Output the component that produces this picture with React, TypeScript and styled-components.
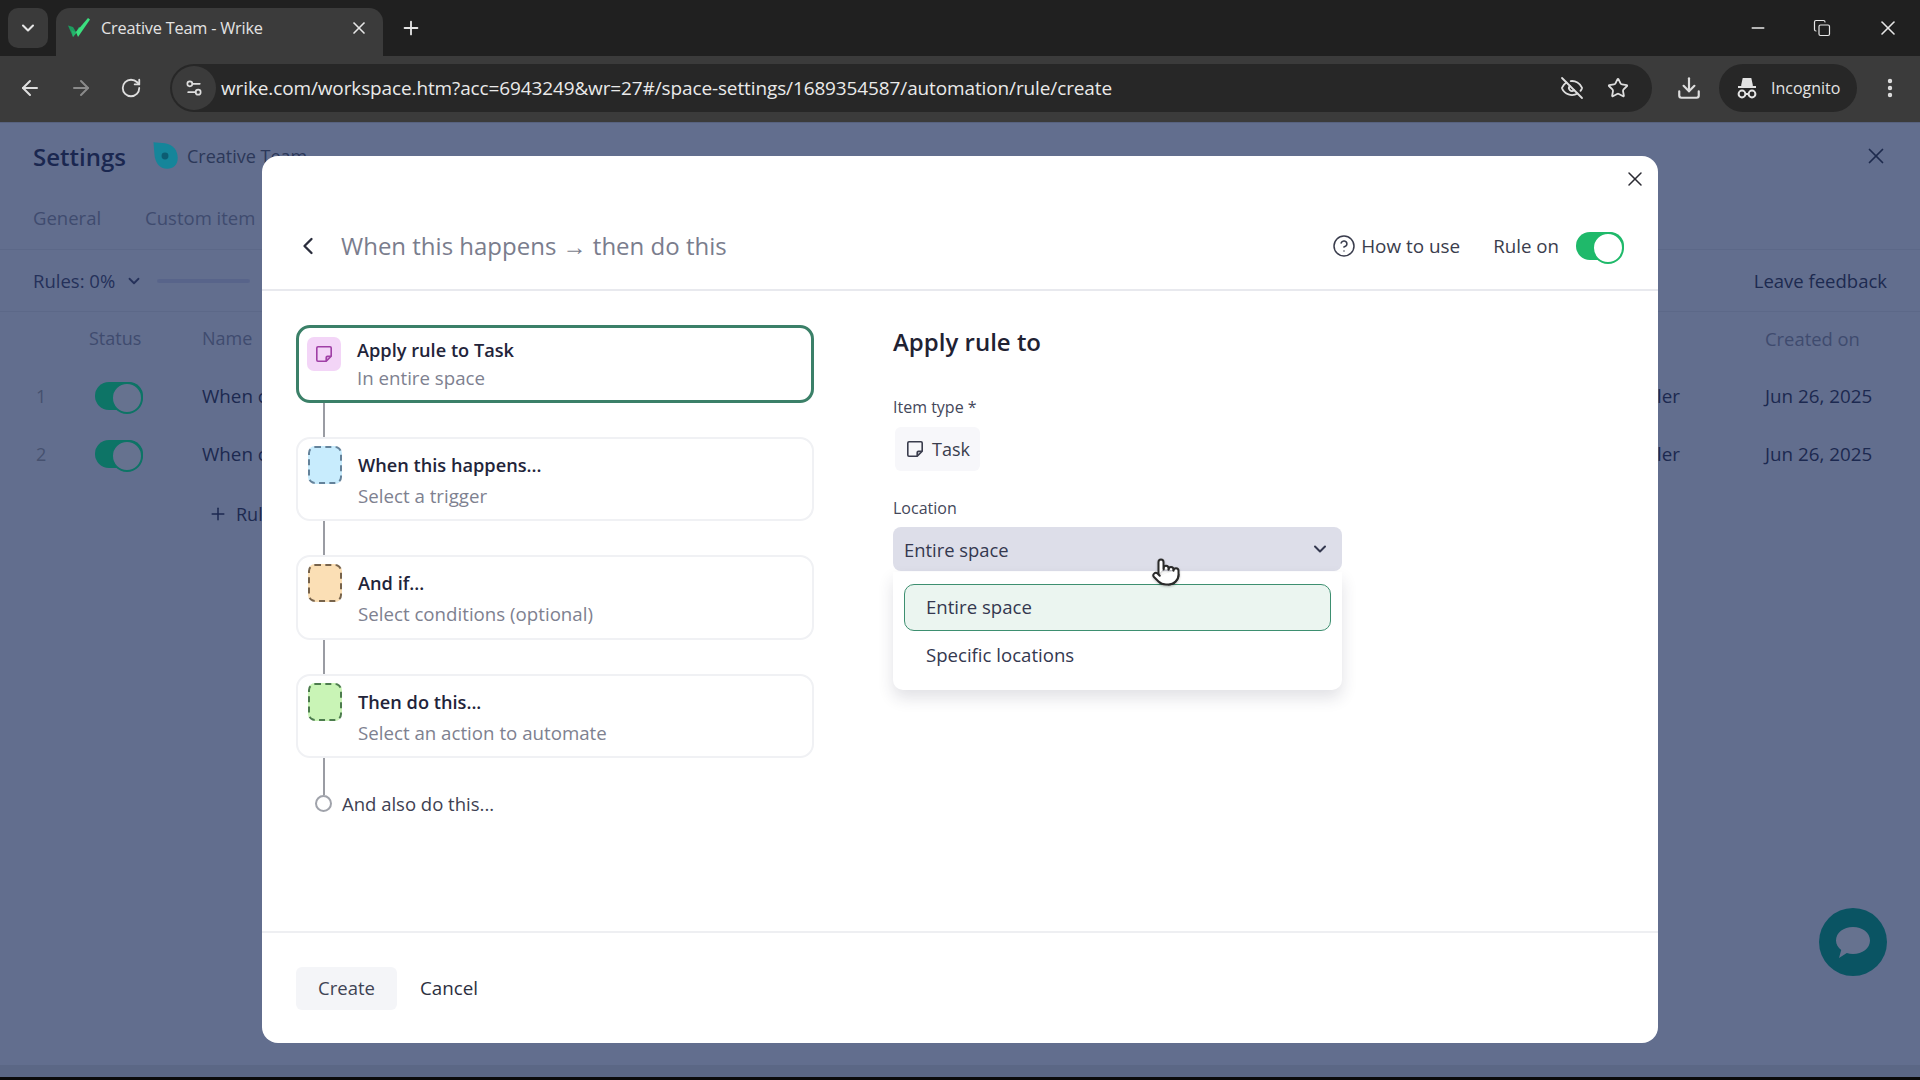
import React from "react";
import styled, { createGlobalStyle } from "styled-components";
import {
  ArrowLeft, ArrowRight, ChevronDown, ChevronLeft, CircleHelp, Copy, Download, EllipsisVertical,
  EyeOff, Minus, Plus, Pointer, RotateCw, Settings2, Star, X,
} from "lucide-react";

const Global = createGlobalStyle`
  html, body { margin: 0; padding: 0; background: #000; }
  * { box-sizing: border-box; }
  body { font-family: "Open Sans", "Noto Sans", "Liberation Sans", sans-serif; }
`;

const Screen = styled.div`
  width: 1920px; height: 1080px; display: flex; flex-direction: column; overflow: hidden; background: #000;
`;

/* ---------- browser chrome ---------- */
const TabStrip = styled.div`
  height: 56px; flex: none; background: #202020; display: flex; align-items: flex-end;
  padding-left: 8px; color: #e6e6e6;
`;
const TabSearch = styled.div`
  width: 40px; height: 40px; margin-bottom: 8px; border-radius: 10px; background: #3a3a3a;
  display: flex; align-items: center; justify-content: center;
`;
const Tab = styled.div`
  width: 327px; height: 48px; margin-left: 8px; background: #3b3b3b; border-radius: 14px 14px 0 0;
  display: flex; align-items: center; padding: 0 14px 8px 11px; gap: 10px;
`;
const TabTitle = styled.span`
  flex: 1; font-size: 16.3px; letter-spacing: -0.2px; white-space: nowrap; color: #e3e3e3;
`;
const NewTab = styled.div`
  width: 55px; display: flex; justify-content: center; align-self: center; margin-top: 0;
`;
const WindowControls = styled.div`
  margin-left: auto; align-self: center; display: flex; align-items: center; gap: 45px; padding-right: 20px;
`;
const Toolbar = styled.div`
  height: 66px; flex: none; background: #3b3b3b; display: flex; align-items: center; color: #dedede;
  padding: 0 0 2px 18px;
`;
const NavButtons = styled.div`
  display: flex; gap: 27px; align-items: center; width: 152px; flex: none;
`;
const AddressBar = styled.div`
  width: 1482px; flex: none; height: 48px; background: #272727; border-radius: 24px; display: flex; align-items: center;
  padding: 0 23px 0 2px;
`;
const SiteChip = styled.div`
  width: 44px; height: 44px; border-radius: 50%; background: #3b3b3b; display: flex; align-items: center;
  justify-content: center; margin-right: 5px;
`;
const Url = styled.span`
  flex: 1; font-size: 18.97px; letter-spacing: -0.1px; color: #eaeaea; white-space: nowrap;
`;
const BarIcons = styled.div`
  display: flex; gap: 23px; align-items: center;
`;
const DownloadSlot = styled.div`
  width: 67px; flex: none; padding-left: 6px; display: flex; justify-content: center;
`;
const IncognitoPill = styled.div`
  width: 138px; flex: none; height: 48px; border-radius: 24px; background: #272727; display: flex; align-items: center;
  padding-left: 16px; gap: 12px; font-size: 16px; color: #e3e3e3;
`;
const MenuSlot = styled.div`
  width: 63px; flex: none; padding-left: 2px; display: flex; justify-content: center;
`;

/* ---------- dimmed page ---------- */
const Page = styled.div`
  flex: 1; position: relative; background: #626e8e; color: #1b2850; font-size: 18px;
  border-top: 1px solid #57627f;
`;
const PageHeader = styled.div`
  height: 68px; display: flex; align-items: center; padding: 0 33px 2px; gap: 24px;
`;
const PageTitle = styled.h1`
  margin: 0; font-size: 24px; font-weight: 600; color: #1a2750;
`;
const SpaceName = styled.div`
  display: flex; align-items: center; gap: 7px; font-size: 18px; color: #2c3859;
`;
const PageClose = styled.div`
  margin-left: auto; display: flex; color: #1d2a4d; margin: -1px -2px 0 auto;
`;
const PageTabs = styled.div`
  height: 59px; display: flex; gap: 44px; padding: 0 33px 5px; align-items: center; color: #3f4b6e; font-size: 18.5px;
  border-bottom: 1px solid #5c6888;
`;
const RulesBar = styled.div`
  height: 62px; display: flex; align-items: center; padding: 0 33px; border-bottom: 1px solid #5c6888;
  font-size: 18.5px; color: #25315a;
`;
const RulesSlider = styled.div`
  width: 93px; height: 4px; background: #56618a; border-radius: 2px; margin-left: 14px; opacity: .8;
`;
const Feedback = styled.span`
  margin-left: auto; color: #1d2a50;
`;
const TableRow = styled.div<{ $h: number }>`
  height: ${(p) => p.$h}px; display: grid; align-items: center; padding-left: 33px;
  grid-template-columns: 56px 113px 1fr 112px 155px;
`;
const TableHead = styled(TableRow)`
  margin-top: -2.5px;
`;
const HeadCell = styled.span`
  color: #3f4b6e; font-size: 18px;
`;
const DateHead = styled(HeadCell)`
  font-size: 18.4px;
`;
const IndexCell = styled.span`
  color: #46516f; font-size: 18px; padding-left: 3px;
`;
const Cell = styled.span`
  color: #1c2950; font-size: 18.8px; white-space: nowrap;
`;
const EndCell = styled(Cell)`
  text-align: right; padding-right: 85px; grid-column: 4;
`;
const StatusCell = styled.div`
  padding-left: 6px; display: flex;
`;
const AddRule = styled.div`
  display: flex; align-items: center; gap: 8px; padding: 19px 0 0 208px; color: #1c2950; font-size: 18px;
`;
const Toggle = styled.div<{ $track: string; $knob: string }>`
  width: 48px; height: 28px; border-radius: 14px; background: ${(p) => p.$track}; position: relative;
  &::after {
    content: ""; position: absolute; right: 0; top: 0; width: 28px; height: 28px; border-radius: 50%;
    background: ${(p) => p.$knob}; border: 2px solid ${(p) => p.$track};
  }
`;
const ChatBubble = styled.div`
  position: absolute; left: 1819px; top: 785px; width: 68px; height: 68px; border-radius: 50%;
  background: #0a5463; display: flex; align-items: center; justify-content: center;
`;
const PageFoot = styled.div`
  position: absolute; left: 0; right: 0; bottom: 0; height: 12px; background: #5b6785;
`;
const BottomEdge = styled.div`
  height: 3px; flex: none; background: #0b0b0b;
`;

/* ---------- modal ---------- */
const Modal = styled.div`
  position: absolute; left: 262px; top: 33px; width: 1396px; height: 887px; background: #fff; border-radius: 16px;
  display: flex; flex-direction: column; color: #1f2233;
`;
const ModalClose = styled.div`
  position: absolute; right: 11px; top: 11px; display: flex; color: #2b2b33;
`;
const ModalHeader = styled.div`
  height: 135px; flex: none; border-bottom: 2px solid #e8e9ee; display: flex; align-items: center;
  padding: 46px 34px 0 32px; color: #2a2d3c;
`;
const BackIcon = styled.div`
  width: 47px; display: flex;
`;
const ModalTitle = styled.h2`
  margin: 0; font-size: 24px; font-weight: 400; color: #7a7d8d; white-space: nowrap;
`;
const HelpLink = styled.div`
  margin-left: auto; display: flex; align-items: center; gap: 5px; font-size: 18.9px; color: #3a3d4d;
`;
const RuleLabel = styled.span`
  margin: 0 17px 0 33px; font-size: 18.7px; color: #3a3d4d;
`;
const ModalBody = styled.div`
  flex: 1; display: flex; padding: 34px 0 0 34px;
`;
const StepColumn = styled.div`
  width: 518px; flex: none; display: flex; flex-direction: column;
`;
const StepCard = styled.div<{ $h: number; $active?: boolean }>`
  height: ${(p) => p.$h}px; flex: none; border-radius: 14px; display: flex; gap: 17px;
  padding: ${(p) => (p.$active ? "9px 8px" : "7px 10px")};
  border: ${(p) => (p.$active ? "3px solid #3b8068" : "2px solid #f0f1f4")};
`;
const StepIcon = styled.div<{ $bg: string; $dash?: string }>`
  width: 34px; height: ${(p) => (p.$dash ? "38px" : "34px")}; flex: none; border-radius: 7px; background: ${(p) => p.$bg};
  border: ${(p) => (p.$dash ? `2px dashed ${p.$dash}` : "none")};
  display: flex; align-items: center; justify-content: center; color: #a03fa6;
`;
const StepText = styled.div<{ $active?: boolean }>`
  display: flex; flex-direction: column; gap: ${(p) => (p.$active ? "4px" : "7px")}; padding-top: ${(p) => (p.$active ? "1px" : "7px")};
  margin-left: -1px;
`;
const StepTitle = styled.div`
  font-size: 18.2px; font-weight: 600; color: #22243a; line-height: 24px;
`;
const StepSub = styled.div`
  font-size: 18.7px; color: #7e8190; line-height: 24px;
`;
const Connector = styled.div<{ $h: number }>`
  width: 1.5px; height: ${(p) => p.$h}px; background: #9a9ca3; margin-left: 27px; flex: none;
`;
const AlsoRow = styled.div`
  display: flex; align-items: center; gap: 10px; margin-left: 19px; font-size: 18.5px; color: #3e4152; height: 17px;
`;
const AlsoDot = styled.div`
  width: 17px; height: 17px; border-radius: 50%; border: 2px solid #a0a3ab; flex: none;
`;
const Panel = styled.div`
  margin-left: 79px; width: 449px; display: flex; flex-direction: column; position: relative;
`;
const PanelTitle = styled.h3`
  margin: -1px 0 0; font-size: 24px; font-weight: 600; line-height: 36px; color: #1f2233;
`;
const FieldLabel = styled.div<{ $top: number }>`
  margin-top: ${(p) => p.$top}px; font-size: 16px; line-height: 22px; color: #44475a;
`;
const TaskChip = styled.div`
  margin: 9px 0 0 2px; width: 85px; height: 44px; border-radius: 6px; background: #f7f7fa; display: flex;
  align-items: center; gap: 8px; padding-left: 11px; font-size: 18px; color: #3a3d4d;
`;
const Select = styled.div`
  margin-top: 8px; height: 44px; border-radius: 8px; background: #dddee9; display: flex; align-items: center;
  justify-content: space-between; padding: 0 12px 0 11px; font-size: 18.4px; color: #34384f;
`;
const Menu = styled.div`
  position: absolute; top: 247px; left: 0; width: 449px; height: 118px; background: #fff; padding: 12px 11px;
  border-radius: 0 0 10px 10px; box-shadow: 0 8px 16px rgba(40, 44, 70, .14);
  display: flex; flex-direction: column; gap: 1px;
`;
const MenuItem = styled.div<{ $selected?: boolean }>`
  height: 47px; flex: none; display: flex; align-items: center; padding: 0 0 2px 21px; border-radius: 10px; font-size: 18.6px;
  color: #34384f; background: ${(p) => (p.$selected ? "#ebf5f0" : "transparent")};
  border: ${(p) => (p.$selected ? "1.5px solid #3d8f70" : "1.5px solid transparent")};
`;
const Cursor = styled.div`
  position: absolute; left: 1151px; top: 434px; display: flex; filter: drop-shadow(0 1px 1px rgba(0,0,0,.25));
`;
const ModalFooter = styled.div`
  height: 112px; flex: none; border-top: 2px solid #eeeff2; display: flex; align-items: center; padding: 0 34px; gap: 23px;
  margin-top: auto; font-size: 18.5px;
`;
const CreateBtn = styled.div`
  width: 101px; height: 43px; background: #f4f5f8; border-radius: 6px; display: flex; align-items: center; justify-content: center;
  color: #3f4354; padding-bottom: 2px;
`;
const CancelBtn = styled.div`
  color: #2c2f3e; font-size: 18.8px;
`;

const WrikeMark = () => (
  <svg width="24" height="22" viewBox="0 0 24 22">
    <path d="M1 8.500l5 1.500 3 5-3 5z" fill="#1d9c5f" />
    <path d="M6 20L4.500 13 9 15 12 10l2 1z" fill="#26b36b" />
    <path d="M9 15L21 1l2 1.500L11 20z" fill="#3be07f" />
  </svg>
);
const SpaceLogo = () => (
  <svg width="30" height="30" viewBox="0 0 26 26">
    <path d="M3 1l10 1c7 1 11 6 11 13 0 6-4 9-9 9-7 0-10-5-11-11z" fill="#15859a" />
    <circle cx="13" cy="13" r="3" fill="#0c5c72" />
  </svg>
);
const NoteIcon = ({ size = 18, color = "currentColor" }: { size?: number; color?: string }) => (
  <svg width={size} height={size} viewBox="0 0 18 18" fill="none" stroke={color} strokeWidth="1.6">
    <path d="M3 1.800h12a1.200 1.200 0 0 1 1.200 1.200v8.200l-5 5H3A1.200 1.200 0 0 1 1.800 15V3A1.200 1.200 0 0 1 3 1.800z" />
    <path d="M11.200 16v-3.600a1.200 1.200 0 0 1 1.200-1.200H16" fill={color} fillOpacity=".35" />
  </svg>
);
const IncognitoIcon = () => (
  <svg width="24" height="24" viewBox="0 0 24 24" fill="none" stroke="#e3e3e3" strokeWidth="2">
    <path d="M7 10l1.500-7h7L17 10" fill="#e3e3e3" />
    <path d="M3 11h18" />
    <circle cx="7" cy="18" r="3.400" />
    <circle cx="17" cy="18" r="3.400" />
    <path d="M10.400 18h3.200" />
  </svg>
);
const ChatIcon = () => (
  <svg width="36" height="34" viewBox="0 0 36 34">
    <path d="M18 2c9.400 0 17 5.600 17 13.500S27.400 29 18 29c-2.200 0-4.300-.3-6.200-.9L4 33l2.200-8C3 22.600 1 19.300 1 15.500 1 7.600 8.600 2 18 2z" fill="#66728f" />
  </svg>
);

const steps = [
  { title: "When this happens...", sub: "Select a trigger", h: 84, bg: "#c8ecfd", dash: "#64829a" },
  { title: "And if...", sub: "Select conditions (optional)", h: 85, bg: "#fbdfb5", dash: "#77634b" },
  { title: "Then do this...", sub: "Select an action to automate", h: 84, bg: "#c9f4b6", dash: "#4c7c4d" },
];
const rows = ["1", "2"];

export default function App() {
  return (
    <Screen>
      <Global />
      <TabStrip>
        <TabSearch><ChevronDown size={20} strokeWidth={2.5} /></TabSearch>
        <Tab>
          <WrikeMark />
          <TabTitle>Creative Team - Wrike</TabTitle>
          <X size={20} strokeWidth={2} />
        </Tab>
        <NewTab><Plus size={22} strokeWidth={2} /></NewTab>
        <WindowControls>
          <Minus size={20} strokeWidth={1.6} />
          <Copy size={18} strokeWidth={1.6} />
          <X size={24} strokeWidth={1.6} />
        </WindowControls>
      </TabStrip>
      <Toolbar>
        <NavButtons>
          <ArrowLeft size={24} strokeWidth={2} />
          <ArrowRight size={24} strokeWidth={2} color="#8a8a8a" />
          <RotateCw size={22} strokeWidth={2} />
        </NavButtons>
        <AddressBar>
          <SiteChip><Settings2 size={20} strokeWidth={2} /></SiteChip>
          <Url>wrike.com/workspace.htm?acc=6943249&amp;wr=27#/space-settings/1689354587/automation/rule/create</Url>
          <BarIcons>
            <EyeOff size={24} strokeWidth={1.8} />
            <Star size={22} strokeWidth={2} />
          </BarIcons>
        </AddressBar>
        <DownloadSlot><Download size={26} strokeWidth={2} /></DownloadSlot>
        <IncognitoPill><IncognitoIcon />Incognito</IncognitoPill>
        <MenuSlot><EllipsisVertical size={24} strokeWidth={2.4} /></MenuSlot>
      </Toolbar>
      <Page>
        <PageHeader>
          <PageTitle>Settings</PageTitle>
          <SpaceName><SpaceLogo />Creative Team</SpaceName>
          <PageClose><X size={26} strokeWidth={1.6} /></PageClose>
        </PageHeader>
        <PageTabs>
          <span>General</span>
          <span>Custom item</span>
        </PageTabs>
        <RulesBar>
          <span>Rules: 0%</span>
          <ChevronDown size={18} strokeWidth={2.4} style={{ marginLeft: 10 }} />
          <RulesSlider />
          <Feedback>Leave feedback</Feedback>
        </RulesBar>
        <TableHead $h={57}>
          <span />
          <HeadCell>Status</HeadCell>
          <HeadCell>Name</HeadCell>
          <span />
          <DateHead>Created on</DateHead>
        </TableHead>
        {rows.map((n) => (
          <TableRow $h={58} key={n}>
            <IndexCell>{n}</IndexCell>
            <StatusCell><Toggle $track="#0d7466" $knob="#66728f" /></StatusCell>
            <Cell>When c</Cell>
            <EndCell>ler</EndCell>
            <Cell>Jun 26, 2025</Cell>
          </TableRow>
        ))}
        <AddRule><Plus size={20} strokeWidth={1.8} />Rule</AddRule>
        <PageFoot />
        <ChatBubble><ChatIcon /></ChatBubble>
        <Modal>
          <ModalClose><X size={24} strokeWidth={1.5} /></ModalClose>
          <ModalHeader>
            <BackIcon><ChevronLeft size={28} strokeWidth={2} /></BackIcon>
            <ModalTitle>When this happens → then do this</ModalTitle>
            <HelpLink><CircleHelp size={24} strokeWidth={1.5} />How to use</HelpLink>
            <RuleLabel>Rule on</RuleLabel>
            <Toggle $track="#1fb96a" $knob="#ffffff" />
          </ModalHeader>
          <ModalBody>
            <StepColumn>
              <StepCard $h={78} $active>
                <StepIcon $bg="#f3d5f7"><NoteIcon /></StepIcon>
                <StepText $active>
                  <StepTitle>Apply rule to Task</StepTitle>
                  <StepSub>In entire space</StepSub>
                </StepText>
              </StepCard>
              {steps.map((s) => (
                <React.Fragment key={s.title}>
                  <Connector $h={34} />
                  <StepCard $h={s.h}>
                    <StepIcon $bg={s.bg} $dash={s.dash} />
                    <StepText>
                      <StepTitle>{s.title}</StepTitle>
                      <StepSub>{s.sub}</StepSub>
                    </StepText>
                  </StepCard>
                </React.Fragment>
              ))}
              <Connector $h={37} />
              <AlsoRow><AlsoDot />And also do this...</AlsoRow>
            </StepColumn>
            <Panel>
              <PanelTitle>Apply rule to</PanelTitle>
              <FieldLabel $top={36}>Item type *</FieldLabel>
              <TaskChip><NoteIcon color="#3a3d4d" />Task</TaskChip>
              <FieldLabel $top={26}>Location</FieldLabel>
              <Select>Entire space<ChevronDown size={20} strokeWidth={2.4} /></Select>
              <Menu>
                <MenuItem $selected>Entire space</MenuItem>
                <MenuItem>Specific locations</MenuItem>
              </Menu>
            </Panel>
          </ModalBody>
          <ModalFooter>
            <CreateBtn>Create</CreateBtn>
            <CancelBtn>Cancel</CancelBtn>
          </ModalFooter>
        </Modal>
        <Cursor><Pointer size={30} strokeWidth={1.6} fill="#fff" color="#2a2a2a" /></Cursor>
      </Page>
      <BottomEdge />
    </Screen>
  );
}
